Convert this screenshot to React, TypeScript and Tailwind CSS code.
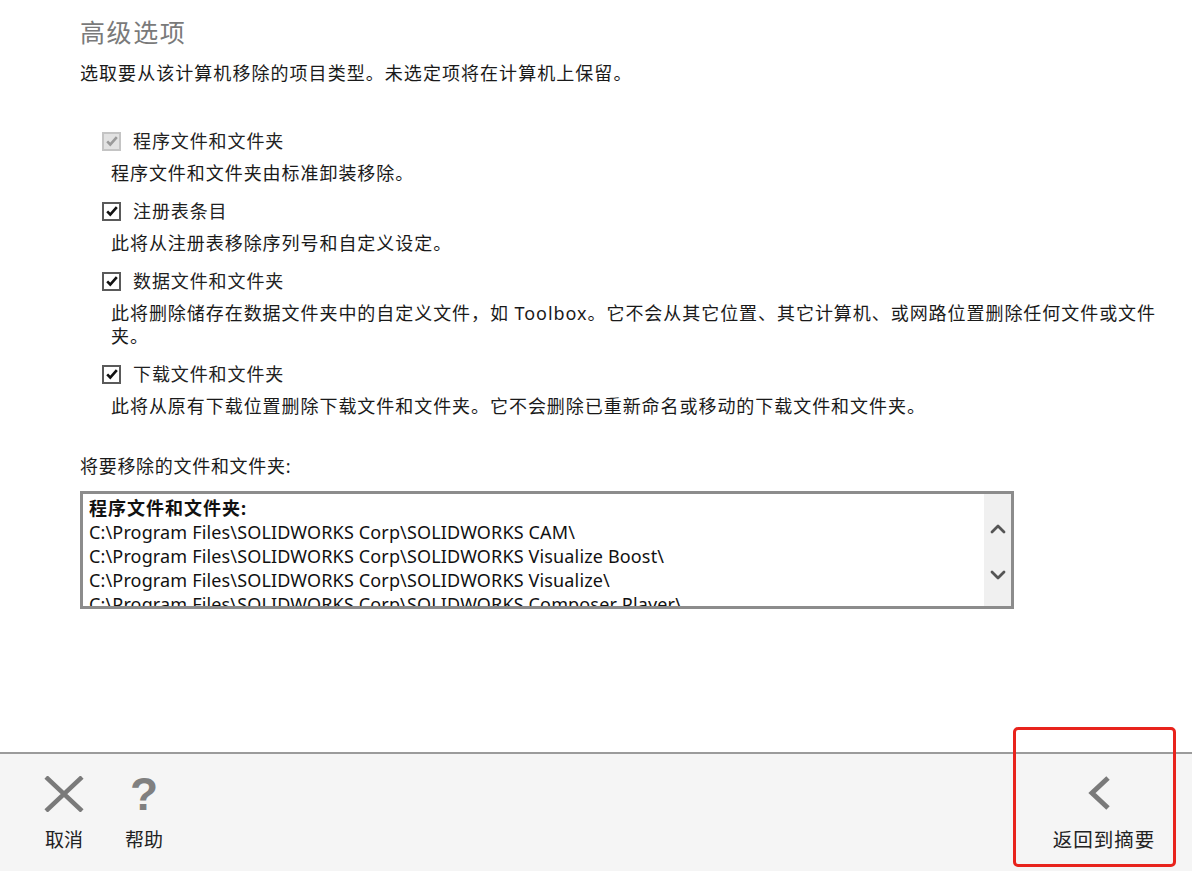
import { ChevronUp, ChevronDown } from "lucide-react";

const OPTIONS = [
  {
    label: "程序文件和文件夹",
    desc: ["程序文件和文件夹由标准卸装移除。"],
    disabled: true,
  },
  {
    label: "注册表条目",
    desc: ["此将从注册表移除序列号和自定义设定。"],
  },
  {
    label: "数据文件和文件夹",
    desc: [
      "此将删除储存在数据文件夹中的自定义文件，如 Toolbox。它不会从其它位置、其它计算机、或网路位置删除任何文件或文件",
      "夹。",
    ],
  },
  {
    label: "下载文件和文件夹",
    desc: ["此将从原有下载位置删除下载文件和文件夹。它不会删除已重新命名或移动的下载文件和文件夹。"],
  },
];

const PATHS = [
  "C:\\Program Files\\SOLIDWORKS Corp\\SOLIDWORKS CAM\\",
  "C:\\Program Files\\SOLIDWORKS Corp\\SOLIDWORKS Visualize Boost\\",
  "C:\\Program Files\\SOLIDWORKS Corp\\SOLIDWORKS Visualize\\",
  "C:\\Program Files\\SOLIDWORKS Corp\\SOLIDWORKS Composer Player\\",
];

function CheckBox({ disabled }: { disabled?: boolean }) {
  return (
    <div
      className={`h-[19px] w-[19px] shrink-0 flex items-center justify-center border-2 ${
        disabled ? "border-[#c4c4c4] bg-[#e2e2e2]" : "border-[#5a5a5a] bg-white"
      }`}
    >
      <svg viewBox="0 0 16 16" className="h-[14px] w-[14px]">
        <path
          d="M2.5 8.5 L6 12 L13.5 3.5"
          fill="none"
          stroke={disabled ? "#9a9a9a" : "#111"}
          strokeWidth="3"
        />
      </svg>
    </div>
  );
}

export default function App() {
  return (
    <div className="w-[1192px] h-[871px] bg-white flex flex-col relative overflow-hidden font-['Noto_Sans','Noto_Sans_CJK_SC',sans-serif] text-[#1a1a1a]">
      {/* ── Content ── */}
      <div className="flex-1 pl-[80px] pr-[20px] pt-[15px]">
        <h1 className="text-[25px] leading-[34px] tracking-[1.6px] text-[#7a7a7a]">
          高级选项
        </h1>
        <p className="mt-[12px] text-[18px] leading-[24px] tracking-[1.05px]">
          选取要从该计算机移除的项目类型。未选定项将在计算机上保留。
        </p>

        {/* Options */}
        <div className="mt-[44px] pl-[22px]">
          {OPTIONS.map((o, i) => (
            <div key={o.label} className={i === 0 ? "" : "mt-[14px]"}>
              <div className="flex items-center gap-[12px] h-[24px]">
                <CheckBox disabled={o.disabled} />
                <span className="text-[18px] tracking-[0.9px] text-[#222]">{o.label}</span>
              </div>
              <div className="mt-[9px] pl-[9px] text-[18px] leading-[23px] tracking-[0.95px]">
                {o.desc.map((d) => (
                  <div key={d} className="whitespace-nowrap">
                    {d}
                  </div>
                ))}
              </div>
            </div>
          ))}
        </div>

        <p className="mt-[36px] text-[18px] leading-[24px] tracking-[0.7px]">
          将要移除的文件和文件夹:
        </p>

        {/* List box */}
        <div className="mt-[13px] w-[934px] h-[118px] border-[3px] border-[#8c8c8c] flex">
          <div className="flex-1 pl-[6px] pt-[2px] overflow-hidden text-[18px] leading-[24px] tracking-[0.15px] text-[#111]">
            <div className="font-bold tracking-[1px]">程序文件和文件夹:</div>
            {PATHS.map((p) => (
              <div key={p} className="whitespace-nowrap">
                {p}
              </div>
            ))}
          </div>
          <div className="w-[27px] bg-[#f0f0f0] flex flex-col items-center pt-[23px] gap-[22px]">
            <ChevronUp className="h-[24px] w-[24px] text-[#555]" strokeWidth={2.8} />
            <ChevronDown className="h-[24px] w-[24px] text-[#555]" strokeWidth={2.8} />
          </div>
        </div>
      </div>

      {/* ── Footer ── */}
      <div className="h-[119px] border-t-2 border-[#9b9b9b] bg-[#f5f5f5] flex items-start px-[44px] pt-[22px]">
        <button className="flex flex-col items-center w-[40px]">
          <svg viewBox="0 0 40 36" className="h-[36px] w-[40px]">
            <path d="M2 1 L38 35 M38 1 L2 35" stroke="#7a7a7a" strokeWidth="4.5" />
          </svg>
          <span className="mt-[15px] text-[19px] leading-[26px] text-[#222]">取消</span>
        </button>
        <button className="ml-[40px] flex flex-col items-center w-[40px]">
          <span className="h-[36px] text-[46px] leading-[36px] font-bold text-[#808080] font-['Liberation_Sans',sans-serif]">
            ?
          </span>
          <span className="mt-[15px] text-[19px] leading-[26px] text-[#222]">帮助</span>
        </button>
        <button className="ml-auto mr-[-11px] flex flex-col items-center w-[110px]">
          <svg viewBox="0 0 24 34" className="h-[34px] w-[24px] mr-[10px]">
            <path d="M21 2 L5 17 L21 32" fill="none" stroke="#7a7a7a" strokeWidth="5" />
          </svg>
          <span className="mt-[17px] text-[19.5px] leading-[26px] text-[#222] tracking-[1px]">
            返回到摘要
          </span>
        </button>
      </div>

      {/* Red highlight */}
      <div className="absolute left-[1013px] top-[727px] w-[163px] h-[140px] border-[3px] border-[#e8231c] rounded-[5px] pointer-events-none" />
    </div>
  );
}
